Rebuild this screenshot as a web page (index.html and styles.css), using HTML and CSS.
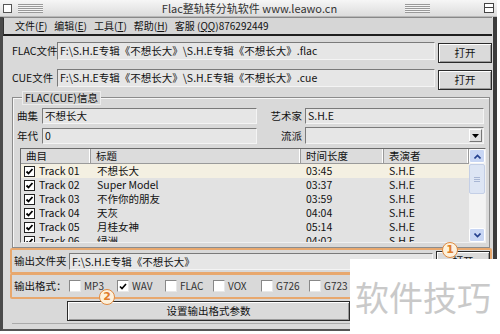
FILE: index.html
```html
<!DOCTYPE HTML>
<html>
<head>
<meta http-equiv="Content-Type" content="text/html; charset=utf-8">
<title>Flac整轨转分轨软件</title>
<link rel="stylesheet" href="styles.css">
</head>
<body>
<div class="win">
	<div class="titlebar">
		<span class="sysbox"></span>
		<span class="grip"></span>
		<span class="title">Flac整轨转分轨软件 www.leawo.cn</span>
		<span class="grip right"></span>
		<span class="maxbox"></span>
	</div>
	<div class="menubar">
		<span>文件(<u>F</u>)</span>
		<span>编辑(<u>E</u>)</span>
		<span>工具(<u>T</u>)</span>
		<span>帮助(<u>H</u>)</span>
		<span>客服 (<u>QQ</u>)876292449</span>
	</div>
	<div class="main">
		<div class="filerow">
			<span class="flabel">FLAC文件</span>
			<div class="field">F:\S.H.E专辑《不想长大》\S.H.E专辑《不想长大》.flac</div>
			<div class="btn">打开</div>
		</div>
		<div class="filerow">
			<span class="flabel">CUE文件</span>
			<div class="field">F:\S.H.E专辑《不想长大》\S.H.E专辑《不想长大》.cue</div>
			<div class="btn">打开</div>
		</div>

		<div class="group">
			<span class="legend">FLAC(CUE)信息</span>
			<div class="meta">
				<span class="mlabel">曲集</span>
				<div class="field small">不想长大</div>
				<span class="mlabel r">艺术家</span>
				<div class="field small">S.H.E</div>
				<span class="mlabel">年代</span>
				<div class="field small">0</div>
				<span class="mlabel r">流派</span>
				<div class="field small select"><span class="drop"><svg width="7" height="4"><path d="M0 0h7L3.5 4z" fill="#000"/></svg></span></div>
			</div>
			<div class="list">
				<div class="cols">
					<div class="head">
						<span class="c1">曲目</span><span class="c2">标题</span><span class="c3">时间长度</span><span class="c4">表演者</span>
					</div>
					<div class="trow sel"><span class="c1"><i class="cb"></i>Track 01</span><span class="c2">不想长大</span><span class="c3">03:45</span><span class="c4">S.H.E</span></div>
					<div class="trow"><span class="c1"><i class="cb"></i>Track 02</span><span class="c2">Super Model</span><span class="c3">03:37</span><span class="c4">S.H.E</span></div>
					<div class="trow"><span class="c1"><i class="cb"></i>Track 03</span><span class="c2">不作你的朋友</span><span class="c3">03:59</span><span class="c4">S.H.E</span></div>
					<div class="trow"><span class="c1"><i class="cb"></i>Track 04</span><span class="c2">天灰</span><span class="c3">04:04</span><span class="c4">S.H.E</span></div>
					<div class="trow"><span class="c1"><i class="cb"></i>Track 05</span><span class="c2">月桂女神</span><span class="c3">05:14</span><span class="c4">S.H.E</span></div>
					<div class="trow"><span class="c1"><i class="cb"></i>Track 06</span><span class="c2">绿洲</span><span class="c3">04:02</span><span class="c4">S.H.E</span></div>
				</div>
				<div class="sb">
					<div class="arrow"><svg width="7" height="5"><path d="M0.5 4.5L3.5 1.5L6.5 4.5" stroke="#24408e" stroke-width="1.6" fill="none"/></svg></div>
					<div class="track"><div class="thumb"><i></i><i></i><i></i></div></div>
					<div class="arrow"><svg width="7" height="5"><path d="M0.5 0.5L3.5 3.5L6.5 0.5" stroke="#24408e" stroke-width="1.6" fill="none"/></svg></div>
				</div>
			</div>
		</div>

		<div class="outrow mark">
			<span class="olabel">输出文件夹</span>
			<div class="field out">F:\S.H.E专辑《不想长大》</div>
			<div class="btn">打开</div>
		</div>
		<div class="fmtrow mark">
			<span class="olabel">输出格式：</span>
			<span class="opt"><i class="box"></i>MP3</span>
			<span class="opt"><i class="box"><svg width="8" height="7"><path d="M1 3.5L3 5.5L7 1" stroke="#000" stroke-width="1.6" fill="none"/></svg></i>WAV</span>
			<span class="opt"><i class="box"></i>FLAC</span>
			<span class="opt"><i class="box"></i>VOX</span>
			<span class="opt"><i class="box"></i>G726</span>
			<span class="opt"><i class="box"></i>G723</span>
		</div>
		<div class="btnrow">
			<div class="btn wide">设置输出格式参数</div>
		</div>
	</div>
</div>

<!-- annotations and watermark sit on top of the window -->
<span class="badge b1">1</span>
<span class="badge b2">2</span>
<div class="wm">软件技巧</div>
</body>
</html>
```
FILE: styles.css
```css
*{
	box-sizing:border-box;
}

body{
	margin:0;
	background:#fff;
	font-family:"Noto Sans CJK SC", "Liberation Sans", sans-serif;
	font-size:10.5px;
	line-height:14px;
	color:#111;
}

u{
	text-decoration:underline;
}

span{
	white-space:nowrap;
}

.win{
	width:497px;
	height:331px;
	background:#d9d9d9;
	border-left:3px solid #4a4a4a;
	border-right:4px solid #3c3c3c;
	border-bottom:2px solid #555;
	display:flex;
	flex-direction:column;
}

.titlebar{
	height:17px;
	display:flex;
	align-items:center;
	background:linear-gradient(#f6f6f6, #dcdcdc);
	border-bottom:1px solid #b8b8b8;
	margin-left:-3px;
	margin-right:-4px;
	padding:0 3px;
}

.sysbox{
	width:9px;
	height:9px;
	border:1px solid #555;
	background:#fff;
}

.grip{
	width:25px;
	height:9px;
	margin-left:6px;
	background:repeating-linear-gradient(#999 0 1px, #f4f4f4 1px 2px);
}

.grip.right{
	margin-left:0;
	margin-right:54px;
}

.title{
	flex:1;
	text-align:center;
	font-size:11px;
	color:#333;
	padding-left:51px;
}

.maxbox{
	width:10px;
	height:10px;
	border:1px solid #444;
	background:linear-gradient(#fff 0 3px, #444 3px 4px, #fff 4px);
}

.menubar{
	height:19px;
	display:flex;
	align-items:center;
	gap:7px;
	padding-left:11px;
	font-size:10px;
	background:#d6d6d6;
	border-top:1px solid #888;
	border-left:1px solid #333;
	border-bottom:2px solid #1e1e1e;
	margin-right:1px;
}

.main{
	padding:6px 1px 0 9px;
	display:flex;
	flex-direction:column;
}

.filerow{
	display:flex;
	align-items:flex-start;
	height:21px;
	margin-bottom:6px;
}

.flabel{
	width:45px;
	line-height:18px;
}

.field{
	height:18px;
	line-height:16px;
	padding-left:2px;
	background:#e6e6e6;
	border:1px solid;
	border-color:#7a7a7a #f4f4f4 #f4f4f4 #7a7a7a;
	white-space:nowrap;
	overflow:hidden;
}

.filerow .field{
	flex:1;
	margin-right:3px;
}

.btn{
	width:54px;
	height:20px;
	margin-top:1px;
	display:flex;
	align-items:center;
	justify-content:center;
	background:#dadada;
	border:1px solid #2a2a2a;
	box-shadow:inset 1px 1px #fff, inset -1px -1px #9a9a9a;
}

.group{
	position:relative;
	margin:1px 2px 0 0;
	padding:10px 3px 4px 4px;
	border:1px solid #8c8c8c;
	box-shadow:inset 1px 1px #f6f6f6;
}

.legend{
	position:absolute;
	top:-7px;
	left:9px;
	padding:0 2px;
	line-height:12px;
	background:#d2d2d2;
	border:1px solid #ececec;
}

.meta{
	display:grid;
	grid-template-columns:25px 215px 48px 179px;
	grid-template-rows:16px 17px;
	row-gap:3px;
	align-items:center;
}

.mlabel.r{
	text-align:right;
	padding-right:3px;
}

.field.small{
	height:16px;
	line-height:14px;
}

.field.select{
	height:17px;
	position:relative;
}

.drop{
	position:absolute;
	right:1px;
	top:1px;
	width:13px;
	height:13px;
	display:flex;
	align-items:center;
	justify-content:center;
	background:#e0e0e0;
	border:1px solid #fff;
	border-right-color:#777;
	border-bottom-color:#777;
}

.list{
	margin:4px 0 0 3px;
	height:95px;
	display:flex;
	border:1px solid;
	border-color:#6a6a6a #f0f0f0 #f0f0f0 #6a6a6a;
	background:#e2e2e2;
	overflow:hidden;
}

.cols{
	width:448px;
}

.head,
.trow{
	display:flex;
	height:14px;
	line-height:14px;
}

.head{
	height:15px;
	background:#dcdcdc;
	border-bottom:1px solid #9a9a9a;
}

.head span{
	padding-left:5px;
	border-right:1px solid #9a9a9a;
	box-shadow:inset -1px 0 #fff;
}

.c1{ width:70px; display:flex; align-items:center; }
.c2{ width:210px; padding-left:6px; }
.c3{ width:83px; padding-left:5px; }
.c4{ width:85px; padding-left:5px; }

.trow .c1{
	padding-left:3px;
}

.trow.sel{
	background:#f4f0e2;
}

.cb{
	width:11px;
	height:11px;
	margin-right:4px;
	border:1px solid #222;
	background:#fff url("data:image/svg+xml;utf8,<svg xmlns='http://www.w3.org/2000/svg' width='9' height='9'><path d='M1.5 4.5L3.5 6.5L7.5 2' stroke='black' stroke-width='1.8' fill='none'/></svg>") no-repeat center;
}

.sb{
	width:16px;
	display:flex;
	flex-direction:column;
	background:#f3f3f3;
}

.arrow{
	height:14px;
	display:flex;
	align-items:center;
	justify-content:center;
	background:#c8d6f4;
	border:1px solid #fff;
	border-radius:2px;
}

.track{
	flex:1;
	padding-top:1px;
}

.thumb{
	height:30px;
	background:#dde5f4;
	border:1px solid #c4cfe6;
	border-radius:2px;
	display:flex;
	flex-direction:column;
	align-items:center;
	justify-content:center;
	gap:1px;
}

.thumb i{
	width:6px;
	height:1px;
	background:#a8b6d4;
}

.mark{
	margin-left:-2px;
	border:2px solid #e8a86e;
	border-radius:2px;
	display:flex;
	align-items:center;
	padding-left:2px;
}

.outrow{
	margin-top:0;
	height:26px;
}

.olabel{
	width:55px;
}

.field.out{
	flex:1;
	height:17px;
	line-height:15px;
	margin-right:3px;
}

.outrow .btn{
	margin-top:0;
}

.fmtrow{
	height:26px;
	margin-top:-1px;
}

.opt{
	width:48px;
	display:flex;
	align-items:center;
	font-size:10px;
	color:#333;
}

.box{
	width:12px;
	height:12px;
	margin-right:3px;
	background:#fff;
	border:1px solid;
	border-color:#888 #e8e8e8 #e8e8e8 #888;
	display:flex;
	align-items:center;
	justify-content:center;
}

.btnrow{
	margin-top:2px;
	padding-left:55px;
	height:23px;
	border-bottom:1px solid #aaa;
}

.btn.wide{
	width:283px;
	margin-top:0;
}

.badge{
	position:absolute;
	width:16px;
	height:16px;
	border-radius:50%;
	border:1.5px solid #e08a40;
	background:#fdf1dc;
	color:#e07b2a;
	font-family:"DejaVu Sans", sans-serif;
	font-size:11px;
	font-weight:bold;
	line-height:13px;
	text-align:center;
}

.b1{
	left:442px;
	top:242px;
}

.b2{
	left:99px;
	top:289px;
}

.wm{
	position:absolute;
	left:350px;
	top:259px;
	width:150px;
	height:75px;
	background:#fff;
	color:#c9c9c9;
	font-size:34px;
	line-height:75px;
	padding-left:5px;
}
```
